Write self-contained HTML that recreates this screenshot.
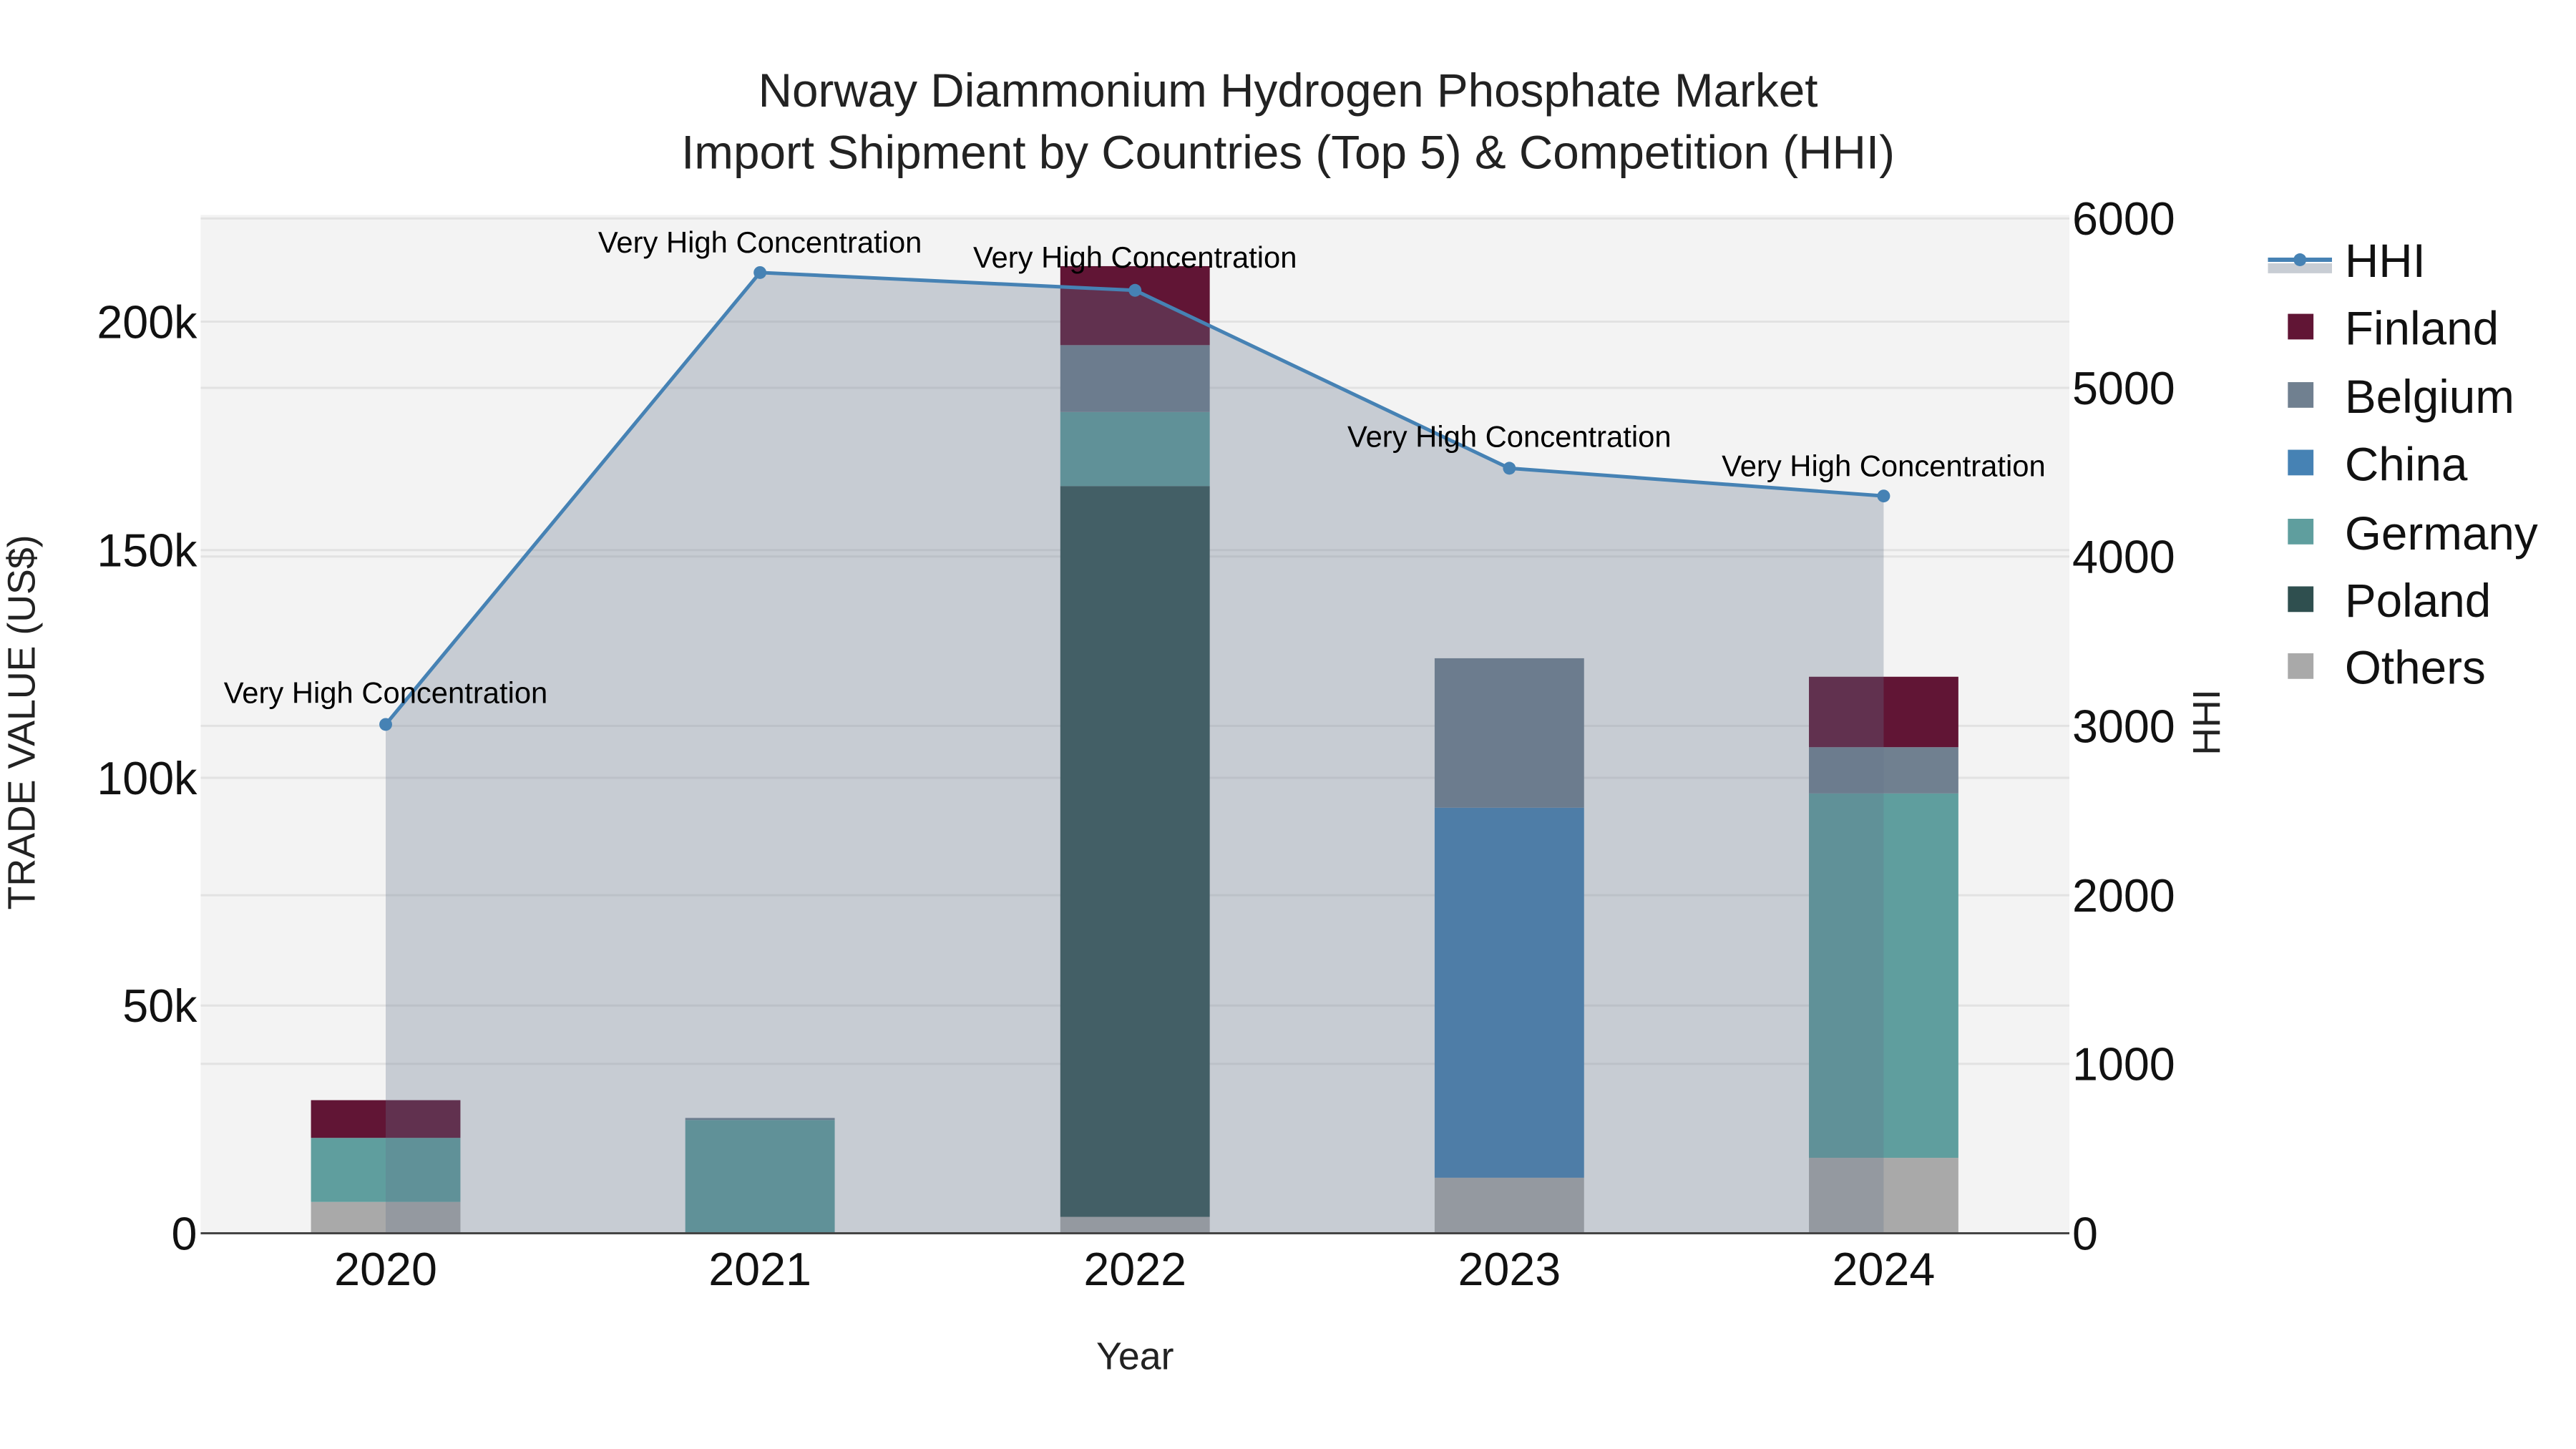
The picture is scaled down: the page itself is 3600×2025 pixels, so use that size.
<!DOCTYPE html>
<html><head><meta charset="utf-8"><style>
html,body{margin:0;padding:0;background:#fff;}
svg{display:block;font-family:"Liberation Sans",sans-serif;}
</style></head><body>
<svg width="3600" height="2025" viewBox="0 0 3600 2025" xmlns="http://www.w3.org/2000/svg">
<rect x="0" y="0" width="3600" height="2025" fill="#fff"/>
<g transform="scale(0.9945)">
<rect x="282" y="302" width="2626" height="1431" fill="#f3f3f3"/>
<g stroke="#e2e2e2" stroke-width="3">
<line x1="282" x2="2908" y1="1413" y2="1413"/>
<line x1="282" x2="2908" y1="1093" y2="1093"/>
<line x1="282" x2="2908" y1="773" y2="773"/>
<line x1="282" x2="2908" y1="452" y2="452"/>
<line x1="282" x2="2908" y1="1495" y2="1495"/>
<line x1="282" x2="2908" y1="1258" y2="1258"/>
<line x1="282" x2="2908" y1="1020" y2="1020"/>
<line x1="282" x2="2908" y1="782" y2="782"/>
<line x1="282" x2="2908" y1="545" y2="545"/>
<line x1="282" x2="2908" y1="307" y2="307"/>
</g>
<g>
<rect x="437" y="1689" width="210" height="44" fill="#a9a9a9"/>
<rect x="437" y="1599" width="210" height="90" fill="#5f9e9e"/>
<rect x="437" y="1546" width="210" height="53" fill="#611535"/>

<rect x="963" y="1571" width="210" height="3" fill="#708090"/>
<rect x="963" y="1574" width="210" height="159" fill="#5f9e9e"/>

<rect x="1490" y="1710" width="210" height="23" fill="#a9a9a9"/>
<rect x="1490" y="683" width="210" height="1027" fill="#355656"/>
<rect x="1490" y="579" width="210" height="104" fill="#5f9e9e"/>
<rect x="1490" y="485" width="210" height="94" fill="#708090"/>
<rect x="1490" y="374" width="210" height="111" fill="#611535"/>

<rect x="2016" y="1655" width="210" height="78" fill="#a9a9a9"/>
<rect x="2016" y="1135" width="210" height="520" fill="#4682b4"/>
<rect x="2016" y="925" width="210" height="210" fill="#708090"/>

<rect x="2542" y="1627" width="210" height="106" fill="#a9a9a9"/>
<rect x="2542" y="1115" width="210" height="512" fill="#5f9e9e"/>
<rect x="2542" y="1050" width="210" height="65" fill="#708090"/>
<rect x="2542" y="951" width="210" height="99" fill="#611535"/>
</g>
<polygon points="542,1733 542,1018 1068,383 1595,408 2121,658 2647,697 2647,1733" fill="rgb(100,117,140)" fill-opacity="0.3"/>
<line x1="282" x2="2908" y1="1733" y2="1733" stroke="#444" stroke-width="3"/>
<polyline points="542,1018 1068,383 1595,408 2121,658 2647,697" fill="none" stroke="#4682b4" stroke-width="5"/>
<g fill="#4682b4">
<circle cx="542" cy="1018" r="9"/><circle cx="1068" cy="383" r="9"/><circle cx="1595" cy="408" r="9"/><circle cx="2121" cy="658" r="9"/><circle cx="2647" cy="697" r="9"/>
</g>
<g font-size="42" fill="#000" text-anchor="middle">
<text x="542" y="988">Very High Concentration</text>
<text x="1068" y="355">Very High Concentration</text>
<text x="1595" y="376">Very High Concentration</text>
<text x="2121" y="628">Very High Concentration</text>
<text x="2647" y="669">Very High Concentration</text>
</g>
<g font-size="66" fill="#222" text-anchor="middle">
<text x="1810" y="150">Norway Diammonium Hydrogen Phosphate Market</text>
<text x="1810" y="237">Import Shipment by Countries (Top 5) &amp; Competition (HHI)</text>
</g>
<g font-size="65" fill="#111" text-anchor="end">
<text x="277" y="1756">0</text>
<text x="277" y="1436">50k</text>
<text x="277" y="1116">100k</text>
<text x="277" y="796">150k</text>
<text x="277" y="475">200k</text>
</g>
<g font-size="65" fill="#111" text-anchor="start">
<text x="2912" y="1756">0</text>
<text x="2912" y="1518">1000</text>
<text x="2912" y="1281">2000</text>
<text x="2912" y="1043">3000</text>
<text x="2912" y="805">4000</text>
<text x="2912" y="568">5000</text>
<text x="2912" y="330">6000</text>
</g>
<g font-size="65" fill="#111" text-anchor="middle">
<text x="542" y="1806">2020</text>
<text x="1068" y="1806">2021</text>
<text x="1595" y="1806">2022</text>
<text x="2121" y="1806">2023</text>
<text x="2647" y="1806">2024</text>
</g>
<text x="1595" y="1924" font-size="54" fill="#222" text-anchor="middle">Year</text>
<text transform="translate(49,1015) rotate(-90)" font-size="54" fill="#222" text-anchor="middle">TRADE VALUE (US$)</text>
<text transform="translate(3119,1015) rotate(-90)" font-size="54" fill="#222" text-anchor="middle">HHI</text>
<rect x="3187" y="370" width="90" height="14" fill="#c8cdd4"/>
<line x1="3187" x2="3277" y1="365" y2="365" stroke="#4682b4" stroke-width="6"/>
<circle cx="3232" cy="365" r="9" fill="#4682b4"/>
<g font-size="66" fill="#111">
<text x="3295" y="389">HHI</text>
<text x="3295" y="484">Finland</text>
<text x="3295" y="580">Belgium</text>
<text x="3295" y="675">China</text>
<text x="3295" y="772">Germany</text>
<text x="3295" y="867">Poland</text>
<text x="3295" y="961">Others</text>
</g>
<rect x="3215" y="441" width="36" height="36" fill="#611535"/>
<rect x="3215" y="537" width="36" height="36" fill="#708090"/>
<rect x="3215" y="632" width="36" height="36" fill="#4682b4"/>
<rect x="3215" y="729" width="36" height="36" fill="#5f9e9e"/>
<rect x="3215" y="824" width="36" height="36" fill="#2f4f4f"/>
<rect x="3215" y="918" width="36" height="36" fill="#a9a9a9"/>
</g>
</svg>
</body></html>
